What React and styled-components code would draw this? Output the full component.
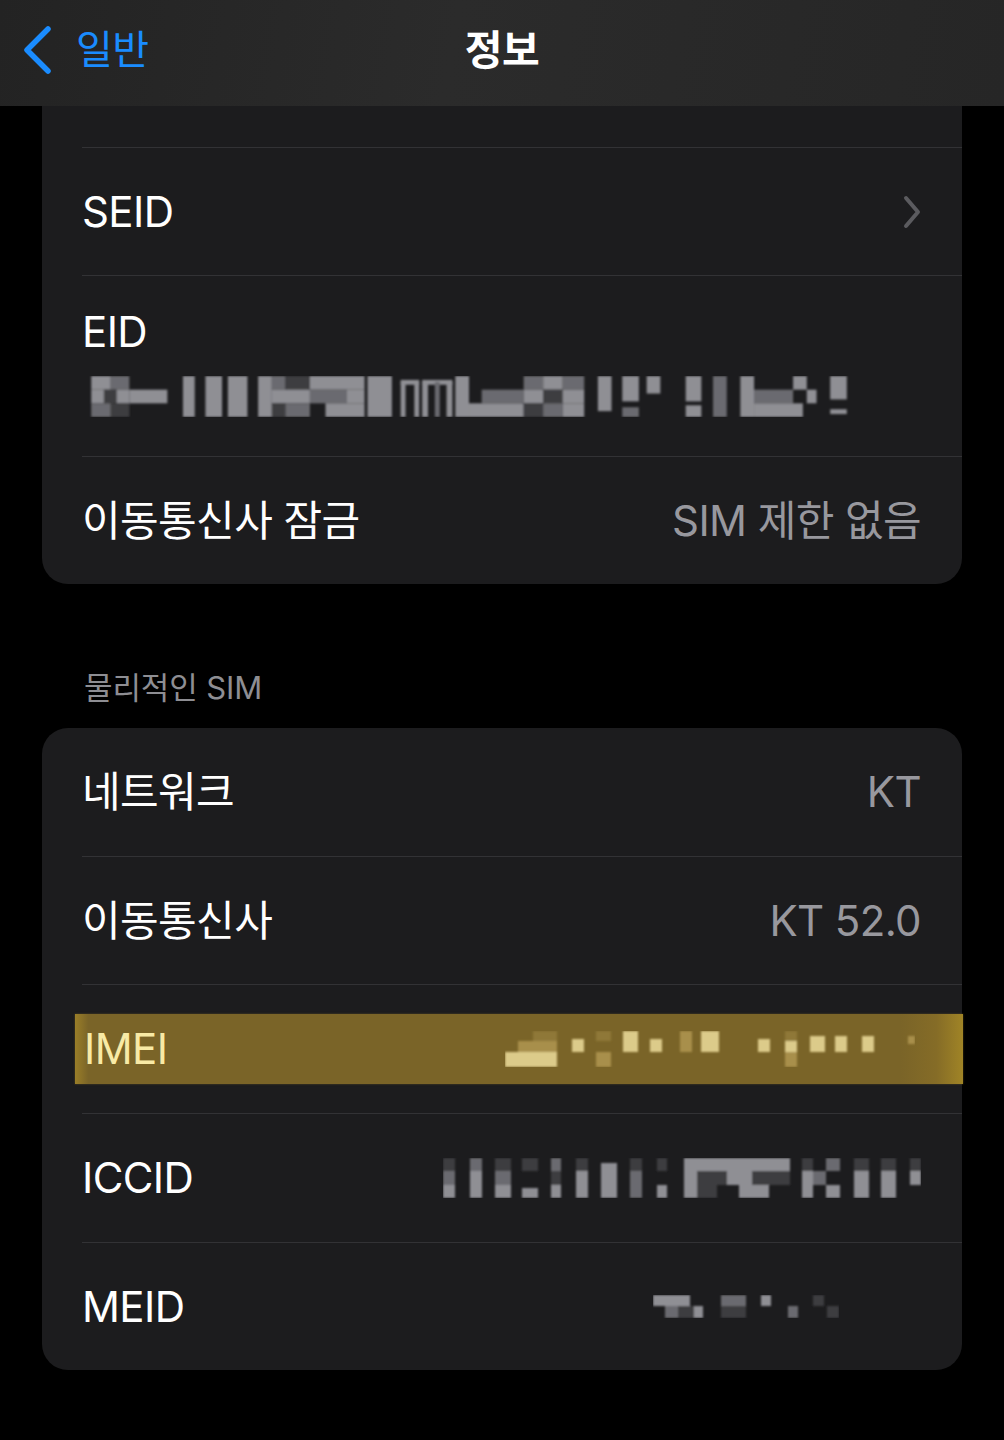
import React from "react";
import styled, { createGlobalStyle } from "styled-components";

const GlobalStyle = createGlobalStyle`
  html, body { margin: 0; padding: 0; background: #000; }
  body { font-family: "Inter", "Noto Sans CJK KR", sans-serif; -webkit-font-smoothing: antialiased; }
  #root { min-height: 1440px; background: #000; }
`;

const Page = styled.div`
  width: 1004px;
  min-height: 1440px;
  background: #000;
  display: flex;
  flex-direction: column;
`;

const NavBar = styled.header`
  height: 106px;
  box-sizing: border-box;
  display: grid;
  grid-template-columns: 1fr auto 1fr;
  align-items: center;
  padding: 0 22px 6px;
  background: linear-gradient(100deg, #232323 0%, #2b2b2b 45%, #262626 100%);
`;

const BackButton = styled.div`
  display: flex;
  align-items: center;
  gap: 24px;
  color: #1a8cff;
  font-size: 40px;
  font-weight: 400;
  line-height: 46px;
  letter-spacing: -0.5px;
`;

const Title = styled.div`
  color: #fff;
  font-size: 41px;
  font-weight: 700;
  line-height: 46px;
  letter-spacing: -0.5px;
`;

const Card = styled.section`
  margin: 0 42px;
  background: #1c1c1e;
  border-radius: ${(p) => (p.$clipped ? "0 0 26px 26px" : "26px")};
  display: flex;
  flex-direction: column;
`;

const ScrolledPart = styled.div`
  height: 41px;
`;

const Row = styled.div`
  box-sizing: border-box;
  margin-left: 40px;
  padding-right: 41px;
  height: ${(p) => p.$h || 128}px;
  border-top: ${(p) => (p.$first ? "none" : "1px solid #323235")};
  display: flex;
  align-items: center;
  justify-content: space-between;
`;

const StackRow = styled.div`
  box-sizing: border-box;
  margin-left: 40px;
  padding: 30px 42px 39px 0;
  height: 181px;
  border-top: 1px solid #323235;
  display: flex;
  flex-direction: column;
  align-items: flex-start;
  gap: 18px;
`;

const Label = styled.span`
  color: ${(p) => p.$color || "#fff"};
  font-size: 42px;
  line-height: 52px;
  font-weight: 400;
  letter-spacing: -0.6px;
`;

const Value = styled.span`
  color: #98989e;
  font-size: 42px;
  line-height: 52px;
  font-weight: 400;
  letter-spacing: -0.6px;
`;

const Highlight = styled.div`
  flex: 1;
  align-self: center;
  height: 70px;
  margin-left: -7px;
  margin-right: -42px;
  padding: 0 48px 0 9px;
  display: flex;
  align-items: center;
  justify-content: space-between;
  background: linear-gradient(
    90deg,
    #9a7e28 0%,
    #7a6428 1.5%,
    #7a6428 93%,
    #856c27 97%,
    #a08426 100%
  );
  box-shadow: 0 0 2px rgba(120, 100, 40, 0.6);
`;

const SectionHeader = styled.div`
  margin: 86px 0 22px 84px;
  color: #8e8e93;
  font-size: 31px;
  line-height: 36px;
  letter-spacing: -0.1px;
`;

const BottomSpace = styled.div`
  height: 70px;
`;

const shadesDark = { l: "#8f8f94", m: "#6a6a6f", d: "#3c3c40" };
const shadesGold = { l: "#dccb8a", m: "#a88f4c", d: "#8f7838" };

function Redacted({ w, h, blocks, shades }) {
  return (
    <svg width={w} height={h} viewBox={`0 0 ${w} ${h}`} style={{ display: "block" }}>
      <defs>
        <filter id="soft" x="-5%" y="-20%" width="110%" height="140%">
          <feGaussianBlur stdDeviation="0.9" />
        </filter>
      </defs>
      <g filter="url(#soft)">
        {blocks.map(([x, y, bw, bh, s], i) => (
          <rect key={i} x={x} y={y} width={bw} height={bh} fill={shades[s]} />
        ))}
      </g>
    </svg>
  );
}

const eidBlocks = [
  [0, 0, 20, 14, "l"], [20, 0, 19, 14, "m"], [0, 14, 13, 14, "l"], [13, 14, 13, 14, "d"], [26, 14, 13, 14, "l"],
  [0, 28, 20, 14, "m"], [20, 28, 19, 14, "d"], [39, 14, 39, 14, "l"],
  [94, 0, 12, 42, "l"], [117, 0, 17, 42, "l"], [140, 0, 20, 42, "l"],
  [171, 0, 14, 42, "l"], [185, 0, 14, 14, "m"], [199, 0, 25, 14, "d"], [185, 14, 39, 14, "l"], [185, 28, 14, 14, "d"], [199, 28, 25, 14, "m"],
  [224, 0, 56, 14, "l"], [262, 14, 18, 14, "l"], [224, 14, 38, 14, "m"], [240, 28, 40, 14, "l"],
  [283, 0, 25, 42, "l"],
  [317, 4, 19, 5, "l"], [317, 6, 5, 36, "l"], [331, 6, 5, 36, "l"],
  [339, 4, 31, 5, "l"], [339, 6, 6, 36, "l"], [364, 6, 6, 36, "l"], [352, 6, 5, 36, "m"],
  [373, 0, 14, 42, "l"], [387, 28, 56, 14, "l"], [400, 14, 43, 14, "m"],
  [443, 0, 20, 14, "m"], [463, 0, 20, 14, "l"], [483, 0, 22, 14, "m"], [443, 14, 20, 14, "l"], [463, 14, 20, 14, "d"],
  [483, 14, 22, 14, "l"], [443, 28, 20, 14, "d"], [463, 28, 20, 14, "m"], [483, 28, 22, 14, "l"],
  [519, 0, 14, 36, "l"], [544, 0, 17, 26, "l"], [544, 32, 17, 10, "m"], [569, 0, 14, 18, "l"],
  [609, 0, 16, 26, "l"], [609, 30, 16, 12, "l"], [637, 0, 14, 42, "m"],
  [665, 0, 14, 42, "l"], [679, 14, 40, 14, "m"], [679, 28, 50, 14, "l"], [719, 0, 14, 14, "l"], [733, 14, 10, 14, "l"],
  [757, 0, 17, 24, "l"], [757, 34, 17, 5, "l"],
];

const imeiBlocks = [
  [0, 21, 52, 15, "l"], [13, 10, 39, 11, "m"], [28, 0, 24, 10, "d"], [67, 8, 12, 13, "l"],
  [91, 0, 15, 10, "d"], [91, 21, 15, 15, "m"], [118, 0, 15, 21, "l"], [145, 8, 12, 13, "l"],
  [175, 0, 12, 21, "m"], [196, 0, 18, 21, "l"], [253, 8, 12, 13, "l"], [280, 0, 12, 10, "d"],
  [280, 10, 12, 11, "l"], [280, 21, 12, 15, "m"], [305, 5, 15, 16, "l"], [330, 5, 12, 16, "l"],
  [357, 5, 12, 16, "l"], [403, 5, 7, 8, "m"],
];

const iccidBlocks = [
  [0, 0, 12, 13, "d"], [0, 13, 12, 14, "m"], [0, 27, 12, 13, "l"],
  [27, 0, 12, 13, "m"], [27, 13, 12, 27, "l"],
  [52, 0, 16, 13, "d"], [52, 13, 16, 14, "m"], [52, 27, 16, 13, "l"],
  [79, 0, 16, 13, "d"], [79, 30, 16, 10, "l"],
  [108, 0, 10, 13, "m"], [108, 13, 10, 14, "d"], [108, 27, 10, 13, "l"],
  [133, 0, 12, 13, "d"], [133, 13, 12, 27, "l"],
  [158, 5, 16, 35, "l"],
  [187, 0, 12, 13, "d"], [187, 13, 12, 27, "m"],
  [214, 0, 10, 13, "d"], [214, 27, 10, 13, "l"],
  [241, 0, 106, 13, "l"], [241, 13, 13, 27, "l"], [254, 13, 30, 14, "d"], [284, 13, 25, 14, "l"],
  [309, 13, 38, 14, "d"], [254, 27, 20, 13, "d"], [296, 27, 30, 13, "l"],
  [359, 0, 11, 13, "d"], [359, 13, 11, 27, "l"], [370, 13, 13, 14, "m"], [383, 0, 14, 13, "m"], [383, 27, 14, 13, "l"],
  [411, 0, 15, 13, "d"], [411, 13, 15, 27, "l"],
  [438, 0, 15, 13, "d"], [438, 13, 15, 27, "l"],
  [467, 0, 11, 13, "d"], [467, 13, 11, 14, "l"],
];

const meidBlocks = [
  [0, 0, 37, 11, "l"], [12, 11, 25, 12, "m"], [25, 11, 16, 12, "d"], [41, 11, 9, 12, "l"],
  [68, 0, 25, 11, "m"], [68, 11, 25, 12, "d"], [108, 0, 10, 11, "l"], [135, 11, 10, 12, "m"],
  [160, 0, 11, 11, "d"], [174, 11, 12, 12, "d"],
];

const MeidValue = styled.div`
  margin-right: 82px;
`;

function BackChevron() {
  return (
    <svg width="30" height="48" viewBox="0 0 30 48">
      <path d="M26 3 L5 24 L26 45" fill="none" stroke="#1a8cff" strokeWidth="5.5" strokeLinecap="round" strokeLinejoin="round" />
    </svg>
  );
}

function Disclosure() {
  return (
    <svg width="18" height="34" viewBox="0 0 18 34">
      <path d="M3 3 L15 17 L3 31" fill="none" stroke="#5b5b5f" strokeWidth="4" strokeLinecap="round" strokeLinejoin="round" />
    </svg>
  );
}

export default function App() {
  return (
    <>
      <GlobalStyle />
      <Page>
        <NavBar>
          <BackButton>
            <BackChevron />
            <span>일반</span>
          </BackButton>
          <Title>정보</Title>
          <div />
        </NavBar>

        <Card $clipped>
          <ScrolledPart />
          <Row>
            <Label>SEID</Label>
            <Disclosure />
          </Row>
          <StackRow>
            <Label>EID</Label>
            <Redacted w={775} h={42} blocks={eidBlocks} shades={shadesDark} />
          </StackRow>
          <Row>
            <Label>이동통신사 잠금</Label>
            <Value>SIM 제한 없음</Value>
          </Row>
        </Card>

        <SectionHeader>물리적인 SIM</SectionHeader>

        <Card>
          <Row $first>
            <Label>네트워크</Label>
            <Value>KT</Value>
          </Row>
          <Row>
            <Label>이동통신사</Label>
            <Value>KT 52.0</Value>
          </Row>
          <Row $h={129}>
            <Highlight>
              <Label $color="#f8eaa6">IMEI</Label>
              <Redacted w={410} h={36} blocks={imeiBlocks} shades={shadesGold} />
            </Highlight>
          </Row>
          <Row $h={129}>
            <Label>ICCID</Label>
            <Redacted w={478} h={40} blocks={iccidBlocks} shades={shadesDark} />
          </Row>
          <Row>
            <Label>MEID</Label>
            <MeidValue>
              <Redacted w={186} h={23} blocks={meidBlocks} shades={shadesDark} />
            </MeidValue>
          </Row>
        </Card>
        <BottomSpace />
      </Page>
    </>
  );
}
